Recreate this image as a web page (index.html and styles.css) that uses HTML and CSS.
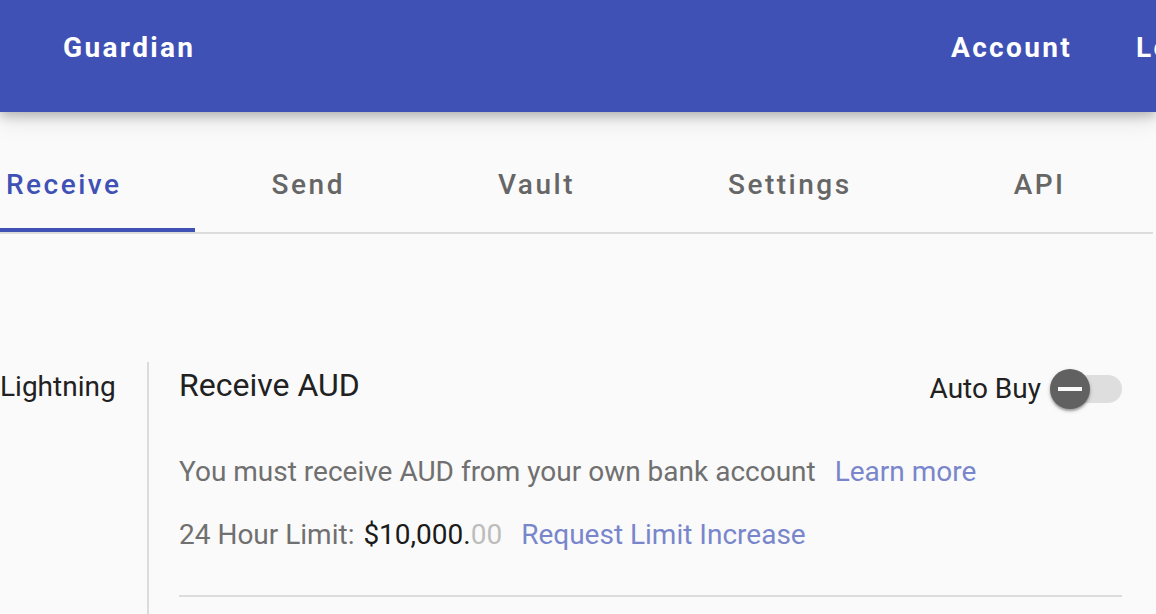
FILE: index.html
```html
<!DOCTYPE html>
<html lang="en">
<head>
    <meta charset="UTF-8">
    <meta name="viewport" content="width=device-width, initial-scale=1.0">
    <title>Guardian</title>
    <link rel="stylesheet" href="styles.css">
</head>
<body>
    <header class="app-bar">
        <div class="brand">Guardian</div>
        <nav class="top-nav">
            <a class="top-link">Account</a>
            <a class="top-link">Logout</a>
        </nav>
    </header>

    <div class="tab-bar">
        <div class="tabs">
            <div class="tab active">Receive</div>
            <div class="tab">Send</div>
            <div class="tab">Vault</div>
            <div class="tab">Settings</div>
            <div class="tab">API</div>
        </div>
    </div>

    <main class="main">
        <aside class="side">
            <div class="side-item">Lightning</div>
        </aside>
        <section class="panel">
            <div class="panel-head">
                <h2 class="panel-title">Receive AUD</h2>
                <label class="auto-buy">
                    <span>Auto Buy</span>
                    <span class="switch">
                        <span class="switch-track"></span>
                        <span class="switch-thumb"><span class="switch-minus"></span></span>
                    </span>
                </label>
            </div>
            <p class="note">You must receive AUD from your own bank account <a class="link">Learn more</a></p>
            <p class="limit">24 Hour Limit: <span class="amount">$10,000.<span class="cents">00</span></span> <a class="link">Request Limit Increase</a></p>
            <hr class="divider">
        </section>
    </main>
</body>
</html>
```

FILE: styles.css
```css
body {
    margin: 0;
    padding: 0;
    font-family: 'Roboto', 'Liberation Sans', sans-serif;
    background: #fafafa;
    color: #212121;
    overflow: hidden;
    height: 100vh;
}
.app-bar {
    position: relative;
    z-index: 1;
    display: flex;
    align-items: flex-start;
    height: 112px;
    box-sizing: border-box;
    padding: 34px 0 0 63px;
    background: #3f51b5;
    color: #fff;
    box-shadow: 0 4px 10px rgba(0, 0, 0, 0.22), 0 8px 22px rgba(0, 0, 0, 0.1);
    font-size: 28px;
    line-height: 28px;
    font-weight: 700;
    letter-spacing: 2.35px;
    white-space: nowrap;
}
.brand {
    flex: 0 0 888px;
}
.top-nav {
    display: flex;
    gap: 64px;
}
.top-link {
    color: #fff;
    cursor: pointer;
}
.tab-bar {
    width: 1153px;
    margin-top: 26px;
    border-bottom: 2px solid #dcdcdc;
}
.tabs {
    display: flex;
    gap: 1px;
    margin-left: -70px;
}
.tab {
    display: flex;
    align-items: center;
    justify-content: center;
    box-sizing: border-box;
    min-width: 222px;
    height: 94px;
    padding: 0 76px;
    font-size: 28px;
    line-height: 28px;
    font-weight: 500;
    letter-spacing: 2.5px;
    color: #666;
    cursor: pointer;
}
.tab.active {
    padding-right: 73px;
    color: #3f51b5;
    box-shadow: inset 0 -4px #3f51b5;
}
.main {
    display: flex;
    margin-top: 128px;
    height: 300px;
}
.side {
    width: 115px;
    padding: 5px 32px 0 0;
    border-right: 2px solid #dcdcdc;
    text-align: right;
}
.side-item {
    font-size: 28px;
    line-height: 40px;
    color: #212121;
    white-space: nowrap;
}
.panel {
    width: 943px;
    padding: 3px 0 0 30px;
}
.panel-head {
    display: flex;
    justify-content: space-between;
    align-items: flex-start;
}
.panel-title {
    margin: 0;
    font-size: 32px;
    line-height: 40px;
    font-weight: 400;
    color: #212121;
}
.auto-buy {
    display: flex;
    align-items: center;
    gap: 9px;
    margin-top: 4px;
    font-size: 28px;
    line-height: 40px;
    color: #212121;
}
.switch {
    position: relative;
    display: flex;
    align-items: center;
    width: 72px;
    height: 40px;
}
.switch-track {
    width: 68px;
    height: 28px;
    margin-left: 4px;
    border-radius: 14px;
    background: #dedede;
}
.switch-thumb {
    position: absolute;
    left: 0;
    top: 0;
    display: flex;
    align-items: center;
    justify-content: center;
    width: 40px;
    height: 40px;
    border-radius: 50%;
    background: #616161;
    box-shadow: 0 2px 2px rgba(0, 0, 0, 0.24), 0 2px 4px rgba(0, 0, 0, 0.2);
}
.switch-minus {
    width: 24px;
    height: 4px;
    background: #fafafa;
}
.note,
.limit {
    margin: 0;
    font-size: 28px;
    line-height: 40px;
    color: #707070;
}
.note {
    margin-top: 43px;
}
.limit {
    margin-top: 23px;
}
.link {
    margin-left: 12px;
    color: #7986cb;
    cursor: pointer;
}
.amount {
    margin-left: 2px;
    color: #1a1a1a;
}
.cents {
    color: #bdbdbd;
}
.divider {
    margin: 40px 0 0;
    border: 0;
    border-top: 2px solid #dcdcdc;
}
```
